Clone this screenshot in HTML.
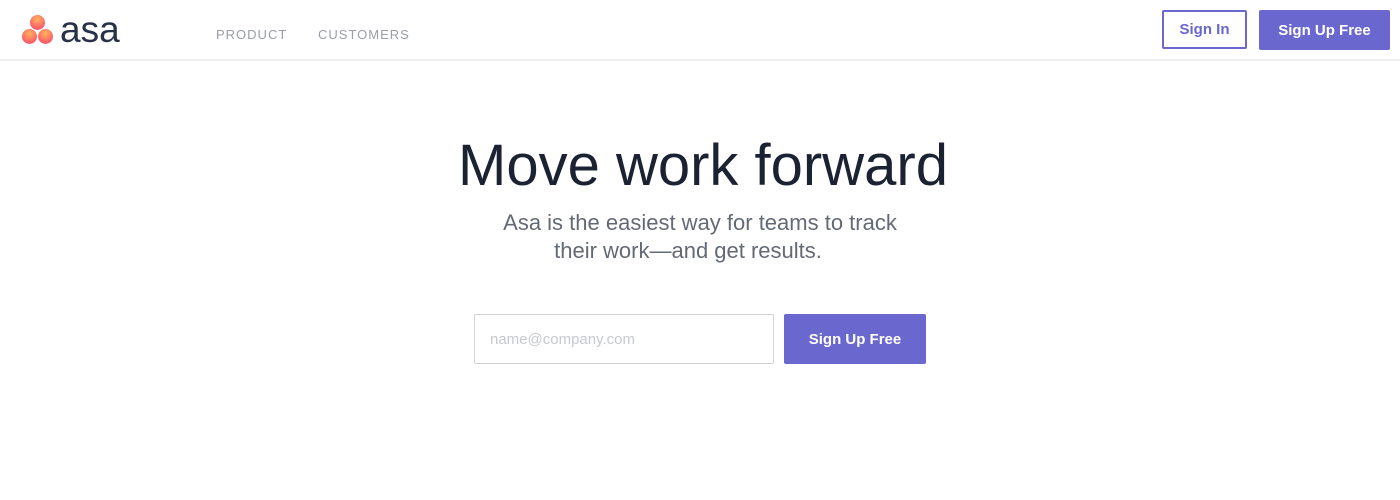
<!DOCTYPE html>
<html><head><style>
body{margin:0;width:1400px;height:500px;background:#fff;font-family:"Liberation Sans",sans-serif;position:relative;overflow:hidden}
.hdr{position:absolute;left:0;top:0;width:1400px;height:59px;border-bottom:2px solid #eef0f2}
.logo{position:absolute;left:60px;top:9px;font-size:37px;color:#273147;letter-spacing:0px}
.dot{position:absolute;width:15px;height:15px;border-radius:50%;background:radial-gradient(circle at 50% 30%,#ffb45c,#f95d6a 70%,#f06a99)}
.nav{position:absolute;top:27px;font-size:13px;letter-spacing:1px;color:#9a9ea8}
.btn{position:absolute;box-sizing:border-box;font-size:15px;font-weight:bold;display:flex;align-items:center;justify-content:center;border-radius:2px}
h1{position:absolute;top:132px;left:0;width:1406px;text-align:center;margin:0;font-weight:normal;font-size:58px;color:#1b2332}
.sub{position:absolute;top:209px;left:0;width:1400px;text-align:center;font-size:22px;line-height:28px;color:#646a75}
</style></head><body>
<div class="hdr">
<div class="dot" style="left:30px;top:15px"></div>
<div class="dot" style="left:22px;top:29px"></div>
<div class="dot" style="left:38px;top:29px"></div>
<div class="logo">asa</div>
<div class="nav" style="left:216px">PRODUCT</div>
<div class="nav" style="left:318px">CUSTOMERS</div>
<div class="btn" style="left:1162px;top:10px;width:85px;height:39px;border:2px solid #6a67ce;color:#6a67ce">Sign In</div>
<div class="btn" style="left:1259px;top:10px;width:131px;height:40px;background:#6a67ce;color:#fff">Sign Up Free</div>
</div>
<h1>Move work forward</h1>
<div class="sub">Asa is the easiest way for teams to track<br><span style="position:relative;left:-12px">their work—and get results.</span></div>
<div style="position:absolute;left:474px;top:314px;width:300px;height:50px;box-sizing:border-box;border:1px solid #cfd2d6;border-radius:2px;font-size:15px;color:#c6c9ce;padding:16px 0 0 15px">name@company.com</div>
<div class="btn" style="left:784px;top:314px;width:142px;height:50px;background:#6a67ce;color:#fff">Sign Up Free</div>
</body></html>
